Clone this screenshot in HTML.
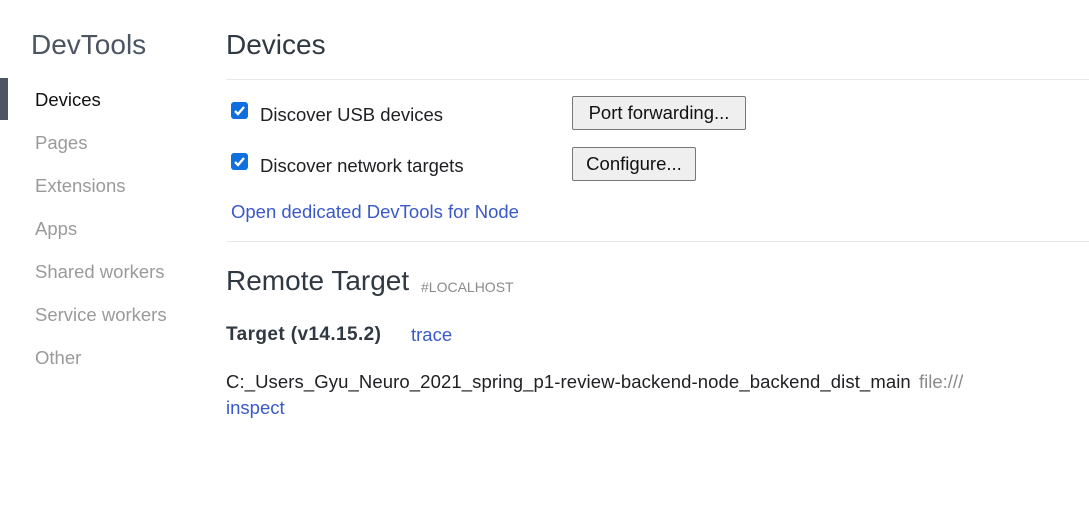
<!DOCTYPE html>
<html><head><style>
body{margin:0;width:1089px;height:505px;background:#fff;font-family:"Liberation Sans",sans-serif;position:relative;overflow:hidden;color:#202124}
.a{position:absolute;white-space:nowrap}
.nav{font-size:18.5px;color:#9a9a9a;left:35px}
.h{font-size:28px;color:#303942}
.cb{position:absolute;left:231px;width:17px;height:17px;background:#0f6fdf;border-radius:3px}
.cb svg{position:absolute;left:2px;top:2px}
.btn{position:absolute;left:572px;border:1px solid #777;background:#efefef;border-radius:2px;font-size:18.5px;color:#111;box-sizing:border-box;text-align:center;line-height:32px}
.lnk{color:#3a59c9}
.t{font-size:18.5px}
</style></head><body>
<div class="a" style="left:0;top:78px;width:8px;height:42px;background:#4c5561"></div>
<div class="a h" style="left:31px;top:29px;color:#4c5561">DevTools</div>
<div class="a nav" style="top:89px;color:#111">Devices</div>
<div class="a nav" style="top:132px">Pages</div>
<div class="a nav" style="top:175px">Extensions</div>
<div class="a nav" style="top:218px">Apps</div>
<div class="a nav" style="top:261px">Shared workers</div>
<div class="a nav" style="top:304px">Service workers</div>
<div class="a nav" style="top:347px">Other</div>

<div class="a h" style="left:226px;top:29px">Devices</div>
<div class="a" style="left:226px;top:79px;width:863px;height:1px;background:#e8e8e8"></div>
<div class="cb" style="top:102px"><svg width="13" height="13" viewBox="0 0 13 13"><path d="M2 7l3 3 6-7" stroke="#fff" stroke-width="2.3" fill="none"/></svg></div>
<div class="a t" style="left:260px;top:104px">Discover USB devices</div>
<div class="btn" style="top:96px;width:174px;height:34px">Port forwarding...</div>
<div class="cb" style="top:153px"><svg width="13" height="13" viewBox="0 0 13 13"><path d="M2 7l3 3 6-7" stroke="#fff" stroke-width="2.3" fill="none"/></svg></div>
<div class="a t" style="left:260px;top:155px">Discover network targets</div>
<div class="btn" style="top:147px;width:124px;height:34px">Configure...</div>
<div class="a lnk t" style="left:231px;top:201px">Open dedicated DevTools for Node</div>
<div class="a" style="left:226px;top:241px;width:863px;height:1px;background:#e8e8e8"></div>

<div class="a h" style="left:226px;top:265px">Remote Target</div>
<div class="a" style="left:421px;top:279px;font-size:14px;color:#8a8a8a">#LOCALHOST</div>
<div class="a" style="left:226px;top:324px;font-size:19px;font-weight:bold;color:#303942;letter-spacing:0.4px">Target (v14.15.2)</div>
<div class="a lnk t" style="left:411px;top:324px">trace</div>
<div class="a t" style="left:226px;top:371px;letter-spacing:0.1px">C:_Users_Gyu_Neuro_2021_spring_p1-review-backend-node_backend_dist_main</div>
<div class="a t" style="left:919px;top:371px;color:#8a8a8a">file:///</div>
<div class="a lnk t" style="left:226px;top:397px">inspect</div>
</body></html>
